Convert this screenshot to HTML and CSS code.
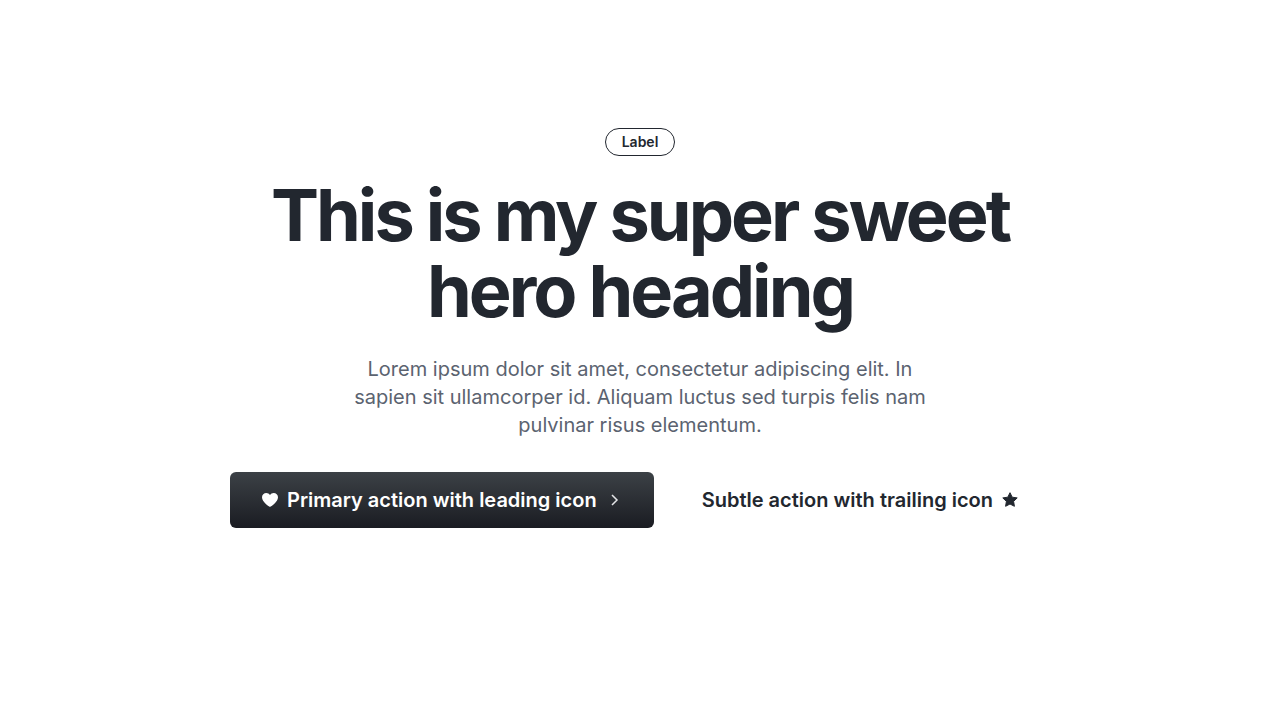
FILE: index.html
```html
<!DOCTYPE html>
<html lang="en">
<head>
<meta charset="utf-8">
<meta name="viewport" content="width=device-width, initial-scale=1">
<title>Hero</title>
<link rel="stylesheet" href="styles.css">
</head>
<body>
<main class="hero">
  <span class="label">Label</span>
  <h1 class="heading">This is my super sweet hero heading</h1>
  <p class="copy">Lorem ipsum dolor sit amet, consectetur adipiscing elit. In sapien sit ullamcorper id. Aliquam luctus sed turpis felis nam pulvinar risus elementum.</p>
  <div class="actions">
    <button class="button primary" type="button">
      <svg class="icon" viewBox="0 0 16 16" aria-hidden="true"><path fill="currentColor" d="M8 15C7 14.500 0 10 0 5.300C0 2.700 2 1 4.300 1C5.900 1 7.200 1.800 8 3C8.800 1.800 10.100 1 11.700 1C14 1 16 2.700 16 5.300C16 10 9 14.500 8 15Z"/></svg>
      <span>Primary action with leading icon</span>
      <svg class="icon chevron" viewBox="0 0 16 16" aria-hidden="true"><path fill="none" stroke="currentColor" stroke-width="1.500" d="M6 3L11 8L6 13"/></svg>
    </button>
    <button class="button subtle" type="button">
      <span>Subtle action with trailing icon</span>
      <svg class="icon" viewBox="0 0 16 16" aria-hidden="true"><path fill="currentColor" stroke="currentColor" stroke-linejoin="round" d="M8 0.700L10.200 5.200L15.200 5.900L11.600 9.400L12.400 14.300L8 12L3.600 14.300L4.400 9.400L0.800 5.900L5.800 5.200Z"/></svg>
    </button>
  </div>
</main>
</body>
</html>
```

FILE: styles.css
```css
* { box-sizing: border-box; }
body {
  margin: 0;
  background: #fff;
  color: #22272f;
  font-family: Inter, "Liberation Sans", sans-serif;
}
.hero {
  display: flex;
  flex-direction: column;
  align-items: center;
  padding: 128px 24px;
  text-align: center;
}
.label {
  padding: 3px 16px;
  border: 1px solid #22272f;
  border-radius: 14px;
  font-size: 14px;
  font-weight: 600;
  line-height: 20px;
}
.heading {
  max-width: 820px;
  margin: 21px 0 0;
  font-size: 72px;
  font-weight: 700;
  line-height: 76px;
  letter-spacing: -3px;
}
.copy {
  max-width: 600px;
  margin: 26px 0 0;
  color: #5b6370;
  font-size: 20px;
  line-height: 28px;
}
.actions {
  display: flex;
  flex-wrap: wrap;
  justify-content: center;
  gap: 16px;
  margin-top: 33px;
}
.button {
  display: flex;
  align-items: center;
  gap: 9px;
  height: 56px;
  padding: 0 32px;
  border: 0;
  border-radius: 6px;
  background: none;
  color: #22272f;
  font: inherit;
  font-size: 20px;
  font-weight: 600;
  white-space: nowrap;
  cursor: pointer;
}
.primary {
  color: #fff;
  background: linear-gradient(#3c4146, #1a1c22);
}
.icon { width: 16px; height: 16px; flex: none; }
.chevron { color: #e4e5e7; }
```
